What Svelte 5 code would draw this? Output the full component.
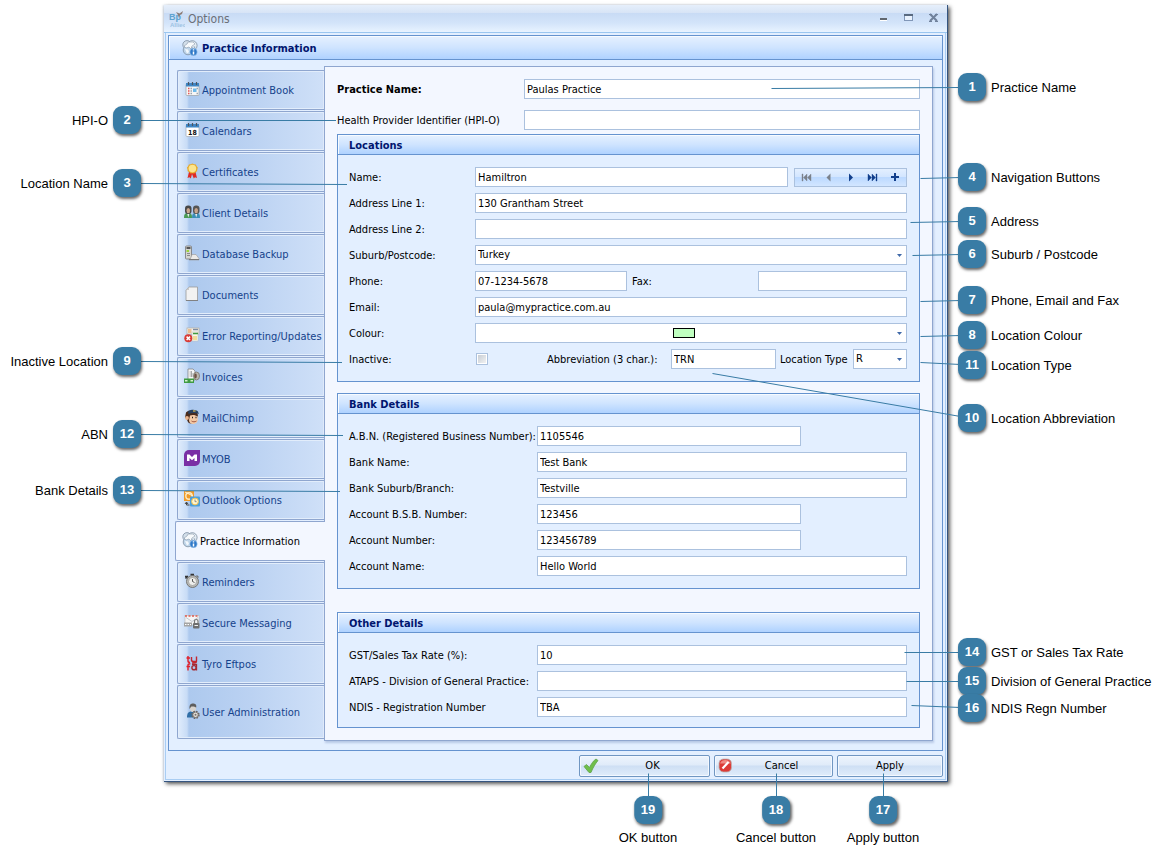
<script>
  const tabs = [
    { label: 'Appointment Book', icon: 'calendar' },
    { label: 'Calendars', icon: 'day' },
    { label: 'Certificates', icon: 'ribbon' },
    { label: 'Client Details', icon: 'people' },
    { label: 'Database Backup', icon: 'backup' },
    { label: 'Documents', icon: 'document' },
    { label: 'Error Reporting/Updates', icon: 'error' },
    { label: 'Invoices', icon: 'invoice' },
    { label: 'MailChimp', icon: 'chimp' },
    { label: 'MYOB', icon: 'myob' },
    { label: 'Outlook Options', icon: 'outlook' },
    { label: 'Practice Information', icon: 'globe', selected: true },
    { label: 'Reminders', icon: 'clock' },
    { label: 'Secure Messaging', icon: 'mail' },
    { label: 'Tyro Eftpos', icon: 'tyro' },
    { label: 'User Administration', icon: 'user', tall: true }
  ];

  const bank = [
    { id: 'abn', label: 'A.B.N. (Registered Business Number):', value: '1105546', short: true },
    { id: 'bank-name', label: 'Bank Name:', value: 'Test Bank' },
    { id: 'branch', label: 'Bank Suburb/Branch:', value: 'Testville' },
    { id: 'bsb', label: 'Account B.S.B. Number:', value: '123456', short: true },
    { id: 'acc-number', label: 'Account Number:', value: '123456789', short: true },
    { id: 'acc-name', label: 'Account Name:', value: 'Hello World' }
  ];

  const other = [
    { id: 'gst', label: 'GST/Sales Tax Rate (%):', value: '10' },
    { id: 'ataps', label: 'ATAPS - Division of General Practice:', value: '' },
    { id: 'ndis', label: 'NDIS - Registration Number', value: 'TBA' }
  ];

  const leftNotes = [
    { n: 2, text: 'HPI-O', y: 120 },
    { n: 3, text: 'Location Name', y: 183 },
    { n: 9, text: 'Inactive Location', y: 361 },
    { n: 12, text: 'ABN', y: 434 },
    { n: 13, text: 'Bank Details', y: 490 }
  ];
  const rightNotes = [
    { n: 1, text: 'Practice Name', y: 87 },
    { n: 4, text: 'Navigation Buttons', y: 177 },
    { n: 5, text: 'Address', y: 221 },
    { n: 6, text: 'Suburb / Postcode', y: 254 },
    { n: 7, text: 'Phone, Email and Fax', y: 300 },
    { n: 8, text: 'Location Colour', y: 335 },
    { n: 11, text: 'Location Type', y: 365 },
    { n: 10, text: 'Location Abbreviation', y: 418 },
    { n: 14, text: 'GST or Sales Tax Rate', y: 652 },
    { n: 15, text: 'Division of General Practice', y: 681 },
    { n: 16, text: 'NDIS Regn Number', y: 708 }
  ];
  const bottomNotes = [
    { n: 19, text: 'OK button', right: 518 },
    { n: 18, text: 'Cancel button', right: 390 },
    { n: 17, text: 'Apply button', right: 283 }
  ];
  const leftLines = [
    [141, 120, 336, 120],
    [141, 183, 347, 184],
    [141, 361, 342, 362],
    [141, 434, 343, 435],
    [141, 490, 340, 491]
  ];
  /* coordinates inside the right-hand layer, which is 600 wide */
  const rightLines = [
    [205, 88, 394, 87],
    [354, 178, 394, 177],
    [344, 222, 394, 221],
    [346, 255, 394, 254],
    [354, 301, 394, 300],
    [354, 336, 394, 335],
    [354, 362, 394, 364],
    [146, 373, 394, 416],
    [338, 652, 394, 652],
    [340, 681, 394, 681],
    [345, 705, 394, 707],
    [82, 773, 82, 797],
    [210, 773, 210, 797],
    [317, 773, 317, 797]
  ];
</script>

{#snippet icon(name)}
  <svg class="icon" viewBox="0 0 16 16" width="16" height="16" aria-hidden="true">
    {#if name === 'calendar'}
      <rect x="2" y="3" width="13" height="11.5" rx="1" fill="#f6f6f6" stroke="#9aa0a8" stroke-width=".7" />
      <rect x="2" y="2" width="13" height="3.500" fill="#3f86c4" />
      <path d="M4.500 1v3M8.500 1v3M12.500 1v3" stroke="#4b5560" stroke-width="1.200" />
      <path d="M4 7.500h1.500M4 10h1.500M4 12.500h1.500" stroke="#e25656" stroke-width="1.300" />
      <path d="M6.500 7.500H8M6.500 10H8M6.500 12.500H8M12.500 12.500H14M12.500 7.500H14" stroke="#9ba5b0" stroke-width="1.300" />
      <rect x="9" y="7.500" width="3.500" height="3.500" fill="#6db9ea" />
    {:else if name === 'day'}
      <rect x="2" y="3" width="13" height="11.500" rx="1" fill="#fff" stroke="#a5abb3" stroke-width=".7" />
      <rect x="2" y="2" width="13" height="3.500" fill="#3f86c4" />
      <path d="M4.500 1v3M8.500 1v3M12.500 1v3" stroke="#4b5560" stroke-width="1.200" />
      <text x="8.500" y="12.500" text-anchor="middle" font-size="7" font-weight="bold" fill="#111">18</text>
    {:else if name === 'ribbon'}
      <path d="M5 9 3.500 15l2-.8 1.300 1.300L8 11l1.800 4.500 1.200-1.300 2 .8L11.500 9z" fill="#e02a24" />
      <path d="M8.400.5l1.600.8 1.900.2.800 1.700 1.100 1.400-.5 1.800-.2 1.800-1.600 1-1.300 1.300-1.800-.2-1.800.2-1.300-1.300-1.600-1-.2-1.800L3 4.600l1.100-1.400.8-1.700 1.900-.2z" fill="#e8a928" />
      <circle cx="8.400" cy="5.600" r="3.800" fill="#fbe58e" />
    {:else if name === 'people'}
      <path d="M0 14c0-4 1-5 4-5s4 1 4 5z" fill="#4a9a55" />
      <path d="M8 14c0-4 1-5 4-5s4 1 4 5z" fill="#3b8fb6" />
      <rect x="1" y="1.500" width="6.500" height="8.500" rx="3" fill="#484848" />
      <rect x="9" y="1.500" width="6.500" height="8.500" rx="3" fill="#555" />
      <ellipse cx="4.300" cy="6.600" rx="1.800" ry="2.700" fill="#c9a58c" />
      <ellipse cx="12.200" cy="6.600" rx="1.800" ry="2.700" fill="#c9a58c" />
      <path d="M3.300 10h2l-1 3.500zM11.200 10h2l-1 3.500z" fill="#eee" />
    {:else if name === 'backup'}
      <rect x="1.500" y="1" width="6" height="13" rx="1" fill="#d5d5d0" stroke="#777" stroke-width=".8" />
      <rect x="2.500" y="2" width="4" height="2" fill="#555" />
      <rect x="2.500" y="5" width="2.500" height="2" fill="#9bd43a" />
      <path d="M3 8.500h3M3 10.500h3" stroke="#888" />
      <path d="M6.500 13.500 8 9.500h4l3 4v1.500H5z" fill="#ecebe8" stroke="#999" stroke-width=".6" />
      <path d="M5 14.500h10" stroke="#777" />
    {:else if name === 'document'}
      <path d="M5 1h8.500v13.500H2V4z" fill="#f2f2f2" stroke="#9a9a9a" stroke-width=".8" />
      <path d="M2 4h3V1z" fill="#c9c9c9" />
      <path d="M2 14.500h12" stroke="#777" stroke-width=".8" />
    {:else if name === 'error'}
      <rect x="3" y="1" width="12" height="6" fill="#f4f1ea" stroke="#b3ada2" stroke-width=".7" />
      <path d="M4 3h3.500M4 5h3.500" stroke="#e38a3a" />
      <path d="M9 2.500h5" stroke="#7e8ca2" stroke-width="1.500" />
      <rect x="8" y="5" width="6" height="9" fill="#f8f6e6" stroke="#bbb" stroke-width=".5" />
      <path d="M9 6.500h5" stroke="#3f9b3f" stroke-width="1.500" />
      <path d="M9 10h4M9 12h4" stroke="#e9c24a" />
      <circle cx="4.300" cy="11.300" r="4" fill="#d93a35" />
      <path d="m2.600 9.600 3.400 3.400m0-3.400-3.400 3.400" stroke="#fff" stroke-width="1.500" />
    {:else if name === 'invoice'}
      <path d="M4 1h5l2 2v9H4z" fill="#f6f6f6" stroke="#888" stroke-width=".8" />
      <path d="M5.500 4h2M5.500 6h4M5.500 8h4M7.500 3v6" stroke="#9a9a9a" stroke-width=".8" />
      <ellipse cx="12.500" cy="8" rx="3" ry="4" fill="#b9b5ad" stroke="#77736c" stroke-width=".8" />
      <ellipse cx="11.500" cy="8" rx="1.300" ry="2.400" fill="#6d5142" />
      <rect x="0" y="10.500" width="10" height="4.500" fill="#3f9b42" />
      <path d="M1 12.800h2.500M6.500 12.800H9" stroke="#d7f0cf" stroke-width="1.400" />
    {:else if name === 'chimp'}
      <path d="M2 3.500C5 .5 11 .5 13 4l1 2-1 3c-1 4-2 5-5 5.500-3 .5-4.500-1.500-5-4L1 8.500z" fill="#4a2b1c" />
      <path d="M6 6.500c2.500-1 6-.5 7.500 1l.3 3c0 3-2.500 4.500-4.800 4.500S5 13.500 5 11z" fill="#f3c9a5" />
      <circle cx="3" cy="9" r="1.900" fill="#eab48c" />
      <path d="M4 2.500C7-.2 12 .3 14 2.500l.8 2.500C11 3.500 8 3.500 4.500 5z" fill="#27405f" />
      <path d="M9 2h2.500" stroke="#e6c255" stroke-width="1.200" />
      <path d="M8 8.500h1M11.500 8.500h1" stroke="#222" stroke-width="1.300" />
      <path d="M7.500 12c1.500 1.200 3.500 1 5 0" stroke="#8a3b2a" fill="none" stroke-width=".8" />
    {:else if name === 'myob'}
      <path d="M5 0h11v11a5 5 0 0 1-5 5H0V5a5 5 0 0 1 5-5z" fill="#7a2fa5" />
      <path d="M3 11V4.500h2.500L8 7l2.500-2.500H13V11h-2.500V8L8 10.300 5.500 8v3z" fill="#fff" />
    {:else if name === 'outlook'}
      <rect x="0" y="0" width="10" height="10" fill="#f09b28" />
      <circle cx="5" cy="5" r="3.200" fill="none" stroke="#fde9bd" stroke-width="1.400" />
      <path d="M1 1l8 4" stroke="#fff3d4" stroke-width="1" />
      <rect x="6" y="5.500" width="10" height="10" rx="1" fill="#4a9fdb" />
      <circle cx="11" cy="10.500" r="3.400" fill="#fff6cf" stroke="#f2c14d" />
      <path d="M11 8.500v2.200h1.600" stroke="#777" fill="none" stroke-width=".8" />
      <path d="M2.500 11.500v2.500h3M1 13l1.500-2 1.500 2" stroke="#444" fill="none" />
    {:else if name === 'globe'}
      <circle cx="5" cy="4.800" r="4.200" fill="#d3dfea" stroke="#7d8fa2" stroke-width=".8" />
      <circle cx="10.300" cy="5.500" r="4.800" fill="#e4ecf3" stroke="#7d8fa2" stroke-width=".8" />
      <circle cx="6" cy="10" r="4.800" fill="#bfd5e9" stroke="#7d8fa2" stroke-width=".8" />
      <path d="M6 2h5l2 2-3 2-1 3-2-2-3 1-2-2 3-2z" fill="#f7fafc" stroke="#8b9bac" stroke-width=".6" />
      <path d="M3 9l3 .5 1 2.500-2 1.500z" fill="#f3f8fc" />
      <path d="M11.500 6l2 1-1 1.500z" fill="#8ea3b8" />
      <circle cx="11.500" cy="12" r="3.700" fill="#2f79c8" stroke="#a7cdf0" stroke-width=".6" />
      <path d="M11.500 11.500v3M11.500 9.200v1.300" stroke="#fff" stroke-width="1.500" />
    {:else if name === 'clock'}
      <circle cx="8.500" cy="8.500" r="6" fill="#b9b9b6" stroke="#777774" />
      <circle cx="8.500" cy="8.500" r="4" fill="#efefec" stroke="#8c8c88" stroke-width=".6" />
      <path d="M8.500 6v2.500l2 1" stroke="#444" fill="none" stroke-width=".9" />
      <path d="M1 3.500h3M1.500 5.500 4 3M6.500 1.500h3.500" stroke="#333" stroke-width="1.500" />
      <path d="M12.500 2.500l2 2" stroke="#777" stroke-width="1.500" />
    {:else if name === 'mail'}
      <rect x="1" y="1.500" width="14" height="9.500" fill="#f5f5f5" stroke="#b9b9b9" stroke-width=".6" />
      <path d="M1 2h14" stroke="#e05a4f" stroke-width="1.300" stroke-dasharray="2 1.500" />
      <path d="M2 3.500l6 4 6-4" stroke="#c3c8cf" fill="none" />
      <path d="M0 8.500h8v4H0z" fill="#a4a4a4" />
      <path d="M1 10.500h6" stroke="#fff" stroke-width="1.200" stroke-dasharray="1.500 1" />
      <rect x="9" y="9" width="6.500" height="5.500" rx="1" fill="#6e6e6e" />
      <path d="M10.500 9V7c0-2 3.500-2 3.500 0v2" stroke="#777" fill="none" stroke-width="1.200" />
      <path d="M10.500 11.500h3.500" stroke="#eee" />
    {:else if name === 'tyro'}
      <path d="M4 1v5c0 1 .5 1.500 2 1.500M2.500 3H6" stroke="#e0202a" fill="none" stroke-width="1.400" />
      <path d="M7.500 2v3c0 1 .8 1.500 2 1.500H12M12.500 1.500v4.500c0 1.500-1 2-2.500 2H8" stroke="#c3262e" fill="none" stroke-width="1.400" />
      <path d="M4 15.500V10c0-.8.800-1.300 2.300-1.300M2.500 11.500H6" stroke="#e0202a" fill="none" stroke-width="1.400" />
      <circle cx="10" cy="12.700" r="2.100" fill="none" stroke="#a52a33" stroke-width="1.400" />
      <path d="M8 9.500h4.500V15.500" fill="none" stroke="#a52a33" stroke-width="1.300" />
    {:else if name === 'user'}
      <path d="M3 14.500c0-4.500 1.500-6 5-6s4 1.500 4 6z" fill="#2f6ea6" />
      <ellipse cx="9" cy="5" rx="3" ry="4" fill="#d9d4ce" />
      <path d="M5.600 6C5 1 7.500.3 9.700.5c2.300.3 3 2 2.500 4C11 3.500 8 3 7 3.800z" fill="#5d5d5d" />
      <circle cx="11.500" cy="11.800" r="3.300" fill="none" stroke="#6b6460" stroke-width="1.800" stroke-dasharray="1.600 1" />
      <circle cx="11.500" cy="11.800" r="2.700" fill="#e3dfda" stroke="#77706a" stroke-width=".9" />
      <circle cx="11.500" cy="11.800" r="1" fill="#77706a" />
    {:else if name === 'tick'}
      <path d="M1 8.500 3.500 6.500l3 3C8.500 5.500 10.500 2.500 13 1l2 1.500C12.500 5.500 10 9.500 8 14.500H6z" fill="#6fbf4b" stroke="#5fa24a" stroke-width=".8" />
    {:else if name === 'stop'}
      <rect x="1" y="1" width="12.500" height="13" rx="4.500" fill="#dc3a36" stroke="#b9b4b4" stroke-width=".8" />
      <path d="M2 5.500C3.500 1 11 .8 12.800 5.500z" fill="#ef8b84" />
      <path d="M4.500 10.500 10.500 4" stroke="#fff" stroke-width="2.200" />
    {/if}
  </svg>
{/snippet}

{#snippet arrow()}
  <svg class="arrow" viewBox="0 0 5 3" width="5" height="3" aria-hidden="true"><path d="M0 0h5L2.500 3z" fill="#3f68a8" /></svg>
{/snippet}

<main class="sheet">
  <section class="window" aria-label="Options">
    <header class="titlebar">
      <svg class="logo" width="16" height="16" viewBox="0 0 16 16" aria-hidden="true">
        <text x="0" y="9" font-size="9" font-weight="bold" fill="#5fa3d0">Bp</text>
        <path d="M7 1l3.500 1.500L14 0l-1 3-2 1-1 3-1-3z" fill="#8b7c77" />
        <text x="1" y="16" font-size="6" font-weight="bold" fill="#9cc3e4">Allied</text>
      </svg>
      <h1>Options</h1>
      <div class="window-buttons">
        <button aria-label="Minimise"><svg width="11" height="11" viewBox="0 0 11 11"><path d="M2 6h7" stroke="#61676f" stroke-width="2" /><path d="M2 7.500h7" stroke="#fff" /></svg></button>
        <button aria-label="Maximise"><svg width="11" height="11" viewBox="0 0 11 11"><rect x="1.500" y="1.500" width="8" height="6" fill="#e9f2fd" stroke="#8197b8" /><path d="M1 2h9" stroke="#596a80" stroke-width="2" /></svg></button>
        <button aria-label="Close"><svg width="11" height="11" viewBox="0 0 11 11"><path d="M2 1l7 7M9 1 2 8" stroke="#70819b" stroke-width="2" /><path d="M1 1.500h3M7 1.500h3M1 8.500h3M7 8.500h3" stroke="#70819b" /></svg></button>
      </div>
    </header>

    <div class="frame">
      <div class="panel">
        <h2 class="panel-title">{@render icon('globe')}<span>Practice Information</span></h2>
        <div class="columns">
          <nav class="tabs">
            {#each tabs as tab}
              <button class="tab" class:selected={tab.selected} class:tall={tab.tall}>
                {@render icon(tab.icon)}<span>{tab.label}</span>
              </button>
            {/each}
          </nav>

          <form class="page">
            <div class="row top">
              <label for="practice"><strong>Practice Name:</strong></label>
              <input id="practice" value="Paulas Practice" />
            </div>
            <div class="row top">
              <label for="hpio">Health Provider Identifier (HPI-O)</label>
              <input id="hpio" />
            </div>

            <section class="group locations">
              <h3><span>Locations</span></h3>
              <div class="body">
                <div class="row">
                  <label for="name">Name:</label>
                  <div class="split name">
                    <input id="name" value="Hamiltron" />
                    <div class="navigator">
                      <button type="button" aria-label="First"><svg width="11" height="9" viewBox="0 0 11 9"><path d="M1 1h1v7H1zM6 1v7L2.500 4.500zM10 1v7L6.500 4.500z" fill="#7b828c" stroke="#7b828c" stroke-width=".4" /></svg></button>
                      <button type="button" aria-label="Previous"><svg width="11" height="9" viewBox="0 0 11 9"><path d="M7.500.5v8l-4-4z" fill="#7b828c" /></svg></button>
                      <button type="button" aria-label="Next"><svg width="11" height="9" viewBox="0 0 11 9"><path d="M4 .5v8l4-4z" fill="#123f8c" /></svg></button>
                      <button type="button" aria-label="Last"><svg width="11" height="9" viewBox="0 0 11 9"><path d="M1 1v7l3.500-3.500zM5 1v7l3.500-3.500zM9 1h1v7H9z" fill="#123f8c" stroke="#123f8c" stroke-width=".4" /></svg></button>
                      <button type="button" aria-label="Add"><svg width="11" height="9" viewBox="0 0 11 9"><path d="M5 0h2v8H5zM2 3h8v2H2z" fill="#123f8c" /></svg></button>
                    </div>
                  </div>
                </div>
                <div class="row"><label for="addr1">Address Line 1:</label><input id="addr1" value="130 Grantham Street" /></div>
                <div class="row"><label for="addr2">Address Line 2:</label><input id="addr2" /></div>
                <div class="row">
                  <label for="suburb">Suburb/Postcode:</label>
                  <div class="combo"><select id="suburb"><option>Turkey</option></select>{@render arrow()}</div>
                </div>
                <div class="row">
                  <label for="phone">Phone:</label>
                  <div class="split phone">
                    <input id="phone" value="07-1234-5678" />
                    <label for="fax">Fax:</label>
                    <input id="fax" />
                  </div>
                </div>
                <div class="row"><label for="email">Email:</label><input id="email" value="paula@mypractice.com.au" /></div>
                <div class="row">
                  <label for="colour">Colour:</label>
                  <div class="combo"><select id="colour"></select><span class="swatch"></span>{@render arrow()}</div>
                </div>
                <div class="row">
                  <label for="inactive">Inactive:</label>
                  <div class="split status">
                    <input id="inactive" type="checkbox" />
                    <label for="abbr">Abbreviation (3 char.):</label>
                    <input id="abbr" value="TRN" />
                    <label for="type">Location Type</label>
                    <div class="combo"><select id="type"><option>R</option></select>{@render arrow()}</div>
                  </div>
                </div>
              </div>
            </section>

            <section class="group bank">
              <h3><span>Bank Details</span></h3>
              <div class="body">
                {#each bank as f}
                  <div class="row"><label for={f.id}>{f.label}</label><input id={f.id} class:short={f.short} value={f.value} /></div>
                {/each}
              </div>
            </section>

            <section class="group other">
              <h3><span>Other Details</span></h3>
              <div class="body">
                {#each other as f}
                  <div class="row"><label for={f.id}>{f.label}</label><input id={f.id} value={f.value} /></div>
                {/each}
              </div>
            </section>
          </form>
        </div>
      </div>

      <footer class="actions">
        <button class="ok">{@render icon('tick')}<span>OK</span></button>
        <button class="cancel">{@render icon('stop')}<span>Cancel</span></button>
        <button class="apply"><span>Apply</span></button>
      </footer>
    </div>
  </section>

  <svg class="lines left" width="400" height="861" aria-hidden="true">
    {#each leftLines as l}<line x1={l[0]} y1={l[1] + 0.5} x2={l[2]} y2={l[3] + 0.5} />{/each}
  </svg>
  <svg class="lines right" width="600" height="861" aria-hidden="true">
    {#each rightLines as l}<line x1={l[0] + 0.5} y1={l[1] + 0.5} x2={l[2] + 0.5} y2={l[3] + 0.5} />{/each}
  </svg>

  {#each leftNotes as c}
    <div class="note left" style="top: {c.y}px"><span>{c.text}</span><b>{c.n}</b></div>
  {/each}
  {#each rightNotes as c}
    <div class="note right" style="top: {c.y}px"><b>{c.n}</b><span>{c.text}</span></div>
  {/each}
  {#each bottomNotes as c}
    <div class="note below" style="right: {c.right}px"><b>{c.n}</b><span>{c.text}</span></div>
  {/each}
</main>

<style>
  :global(body) { background: #fff; }
  .sheet {
    position: relative;
    min-width: 960px;
    padding: 5px 218px 79px 164px;
    font: 11px/14px "DejaVu Sans Condensed", "DejaVu Sans", Tahoma, sans-serif;
    color: #000;
  }
  * { box-sizing: border-box; }
  button, input, select { font: inherit; color: inherit; margin: 0; }
  h1, h2, h3 { margin: 0; font-size: 11px; }
  svg { display: block; flex: none; }

  .window {
    border-right: 1px solid #34547f;
    border-bottom: 1px solid #34547f;
    background: #e3efff;
    box-shadow: 2px 2px 4px rgba(0, 0, 0, .65), -1px 0 2px rgba(120, 150, 190, .3);
  }
  .titlebar {
    display: flex;
    align-items: center;
    gap: 3px;
    height: 28px;
    padding: 0 4px 0 5px;
    border-bottom: 1px solid #9ac6f0;
    background: linear-gradient(#e6effb 0, #d7e4f6 8px, #c8dbf5 8px, #d3e4fa 18px, #e8f3ff 27px);
  }
  .logo { font-family: "Liberation Sans", Arial, sans-serif; }
  .titlebar h1 { flex: 1; font-size: 12px; font-weight: normal; color: #6a6f78; }
  .window-buttons { display: flex; gap: 6px; }
  .window-buttons button { padding: 4px; border: 0; background: none; }
  .frame { margin: 0 1px 1px; padding: 2px 2px 2px; border: solid #a9cdf3; border-width: 0 1px 1px; }

  .panel { border: 1px solid #6593cf; background: #e3efff; padding-bottom: 9px; }
  .panel-title, .group h3 {
    display: flex;
    align-items: center;
    border-bottom: 1px solid #6593cf;
    background: linear-gradient(#e6f1ff, #cfe4ff 50%, #afd2ff);
    box-shadow: inset 1px 1px #f7fbff;
    color: #00156e;
    font-weight: bold;
  }
  .panel-title { height: 24px; gap: 4px; padding-left: 13px; }
  .columns { display: flex; align-items: flex-start; padding: 6px 9px 0 6px; }

  label, h2 span, h3 span, .tab span { padding-top: 2px; }

  .tabs { display: flex; flex-direction: column; gap: 1px; width: 149px; padding-top: 4px; }
  .tab {
    display: flex;
    align-items: center;
    gap: 2px;
    height: 40px;
    margin-left: 2px;
    padding: 0 0 0 6px;
    border: 1px solid #8fa6cf;
    border-right: 0;
    border-radius: 2px 0 0 2px;
    background: linear-gradient(90deg, #e0ecfc 0, #c8dcf6 9px, #adc9ee 11px, #bbd2f2 50%, #cfe0f8);
    box-shadow: inset 0 0 0 1px #e2edfb;
    color: #15428b;
    white-space: nowrap;
  }
  .tab .icon { margin-bottom: 2px; }
  .tab.tall { height: 54px; }
  .tab.selected {
    position: relative;
    margin: 0 -1px 0 0;
    background: #f3f7ff;
    box-shadow: none;
    color: #000;
  }

  .page {
    flex: 1;
    min-width: 0;
    padding: 12px;
    border: 1px solid #8fa6cf;
    background: #f3f7ff;
    box-shadow: 1px 2px 2px #b8c9e6;
  }
  .row { display: grid; align-items: center; height: 20px; }
  .row label { white-space: nowrap; }
  .row.top { grid-template-columns: 187px 1fr; }
  .row.top + .row.top { margin-top: 11px; }
  input, select {
    width: 100%;
    height: 20px;
    padding: 0 2px;
    border: 1px solid #abc1de;
    border-radius: 0;
    background: #fff;
    outline: 0;
  }
  select { appearance: none; display: block; }
  .combo { position: relative; }
  .arrow { position: absolute; right: 5px; top: 9px; }
  .swatch {
    position: absolute;
    left: 198px;
    top: 5px;
    width: 22px;
    height: 10px;
    border: 1px solid #000;
    background: #c0ffc0;
  }

  .group { border: 1px solid #6593cf; background: #e3efff; }
  .group h3 { height: 20px; padding-left: 11px; }
  .group .body { display: grid; gap: 6px; padding: 12px 12px 12px 11px; }
  .locations { margin-top: 4px; }
  .locations .row { grid-template-columns: 126px 1fr; }
  .bank { margin-top: 11px; }
  .bank .row, .other .row { grid-template-columns: 188px 1fr; }
  .bank .short { width: 264px; }
  .other { margin-top: 23px; }
  .other .body { padding-bottom: 10px; }

  .split { display: grid; align-items: center; }
  .split.name { grid-template-columns: 1fr 113px; gap: 6px; }
  .split.phone { grid-template-columns: 152px 1fr 149px; column-gap: 5px; }
  .split.status { grid-template-columns: 72px 1fr 105px 77px 54px; }
  .split.status label[for="type"] { padding-left: 4px; }
  .navigator {
    display: flex;
    align-items: center;
    height: 19px;
    border: 1px solid #abc1de;
    background: linear-gradient(#e3efff, #d3e6ff 45%, #bcd9ff 50%, #d2e6ff);
  }
  .navigator button { flex: 1; display: grid; place-items: center; padding: 0; border: 0; background: none; }
  input[type="checkbox"] {
    appearance: none;
    width: 12px;
    height: 12px;
    margin-left: 1px;
    border: 1px solid #abc1de;
    background: linear-gradient(135deg, #c3c9d1, #f6f6f6);
    box-shadow: inset 0 0 0 1px #fff;
  }

  .actions { display: flex; justify-content: flex-end; gap: 4px; padding-top: 4px; }
  .actions button {
    display: flex;
    align-items: center;
    height: 22px;
    padding: 0 3px;
    border: 1px solid #7096c2;
    border-radius: 2px;
    background: linear-gradient(#edf4fd, #e0ebf9 45%, #cedff4 50%, #e0ecfb);
    box-shadow: inset 0 0 0 1px #f3f8ff;
  }
  .actions span { flex: 1; text-align: center; }
  .ok { width: 131px; }
  .cancel { width: 119px; }
  .apply { width: 106px; }

  .lines { position: absolute; top: 0; pointer-events: none; }
  .lines.left { left: 0; }
  .lines.right { right: 0; }
  .lines line { stroke: #397ca5; stroke-width: 1; }

  .note {
    position: absolute;
    display: flex;
    align-items: center;
    gap: 5px;
    font: 13px/16px "Liberation Sans", Arial, sans-serif;
    white-space: nowrap;
  }
  .note span { padding-top: 1px; }
  .note b {
    display: grid;
    place-items: center;
    width: 28px;
    height: 28px;
    border-radius: 9px;
    background: #397ca5;
    box-shadow: 1px 2px 3px rgba(0, 0, 0, .6);
    color: #fff;
  }
  .note.left { right: calc(100% - 141px); transform: translateY(-50%); }
  .note.right { left: calc(100% - 208px); transform: translateY(-50%); }
  .note.below { top: 796px; flex-direction: column; transform: translateX(50%); }
</style>
